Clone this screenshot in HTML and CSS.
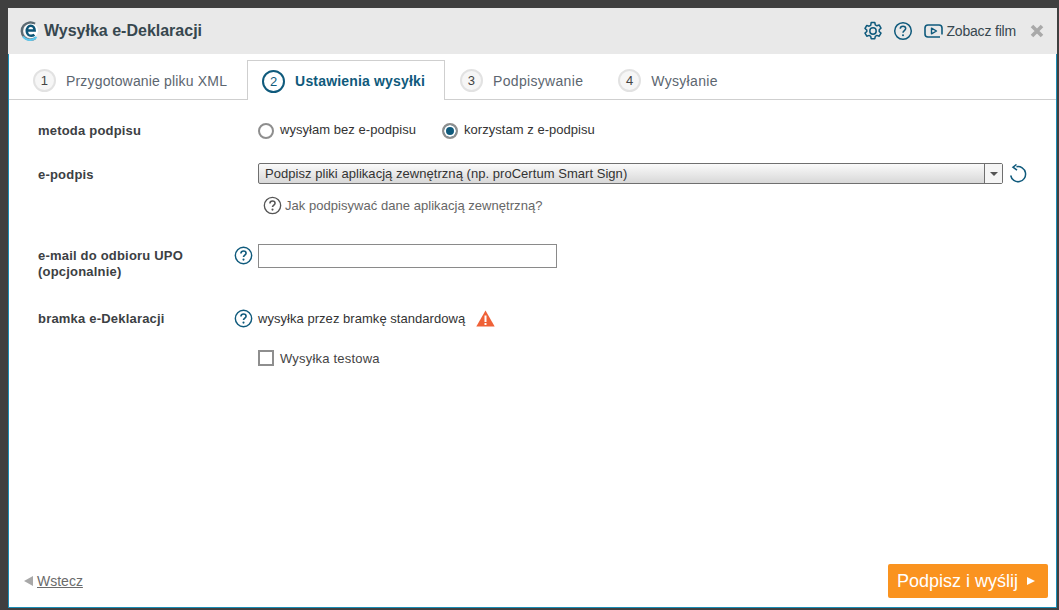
FILE: index.html
```html
<!DOCTYPE html>
<html lang="pl">
<head>
<meta charset="utf-8">
<title>Wysyłka e-Deklaracji</title>
<link rel="stylesheet" href="styles.css">
</head>
<body>
<div class="window">
  <header class="titlebar">
    <svg class="logo" width="20" height="20" viewBox="0 0 20 20"><path d="M15 2.800A8.600 8.600 0 1 0 15.500 17" fill="none" stroke="#5c6b73" stroke-width="2.400"/><path d="M3 15.500A8.600 8.600 0 0 0 16.500 16" fill="none" stroke="#5cc8ee" stroke-width="2"/><circle cx="11" cy="9.800" r="7" fill="#fff"/><path d="M6.800 9.500h7.800c0-3-1.600-4.700-3.800-4.700S6.800 7 6.800 9.900s1.800 4.900 4.300 4.900c1.300 0 2.500-.4 3.300-1.100" fill="none" stroke="#0c5577" stroke-width="2.600"/></svg>
    <h1 class="title">Wysyłka e-Deklaracji</h1>
    <div class="tools">
      <svg class="tool-ico" width="20" height="20" viewBox="0 0 20 20"><path d="M8.200 1.500h3.600l.5 2.400 1.600.9 2.300-.8 1.800 3.100-1.800 1.600v1.800l1.800 1.600-1.800 3.100-2.300-.8-1.600.9-.5 2.400H8.200l-.5-2.400-1.600-.9-2.300.8-1.800-3.100 1.800-1.600V9.100L2 7.500l1.800-3.100 2.300.8 1.600-.9z" fill="none" stroke="#0f5a7c" stroke-width="1.500" stroke-linejoin="round"/><circle cx="10" cy="10" r="3.200" fill="none" stroke="#0f5a7c" stroke-width="1.500"/></svg>
      <svg class="tool-ico help-top" width="20" height="20" viewBox="0 0 20 20"><circle cx="10" cy="10" r="8.300" fill="none" stroke="#0f5a7c" stroke-width="1.500"/><path d="M7.300 7.800C7.300 6.200 8.500 5.300 10 5.300s2.700.9 2.700 2.300c0 1.900-2.700 2-2.700 4.100" fill="none" stroke="#0f5a7c" stroke-width="1.500"/><circle cx="10" cy="14.300" r="1" fill="#0f5a7c"/></svg>
      <a class="film">
        <svg width="19" height="14" viewBox="0 0 19 14"><path d="M18 10.500V4c0-1.700-1.300-3-3-3H4C2.300 1 1 2.300 1 4v6c0 1.700 1.300 3 3 3h12" fill="none" stroke="#0f5a7c" stroke-width="1.600"/><path d="M7.500 4.200v5.600L12.500 7z" fill="none" stroke="#0f5a7c" stroke-width="1.400" stroke-linejoin="round"/></svg>
        <span>Zobacz film</span>
      </a>
      <svg class="close" width="14" height="14" viewBox="0 0 14 14"><path d="M2 2l10 10M12 2L2 12" fill="none" stroke="#a9a9a9" stroke-width="3.600"/></svg>
    </div>
  </header>

  <div class="content">
    <nav class="tabs">
      <div class="tab"><span class="num">1</span><span>Przygotowanie pliku XML</span></div>
      <div class="tab active"><span class="num">2</span><span>Ustawienia wysyłki</span></div>
      <div class="tab wide"><span class="num">3</span><span>Podpisywanie</span></div>
      <div class="tab wide"><span class="num">4</span><span>Wysyłanie</span></div>
    </nav>

    <main class="form">
      <div class="row row-method">
        <div class="label">metoda podpisu</div>
        <div class="help"></div>
        <div class="control radios">
          <label class="radio"><span class="dot"></span>wysyłam bez e-podpisu</label>
          <label class="radio"><span class="dot on"></span>korzystam z e-podpisu</label>
        </div>
      </div>

      <div class="row row-sign">
        <div class="label">e-podpis</div>
        <div class="help"></div>
        <div class="control">
          <div class="select-line">
            <div class="select"><span class="select-text">Podpisz pliki aplikacją zewnętrzną (np. proCertum Smart Sign)</span><span class="select-arrow"></span></div>
            <svg class="refresh" width="20" height="20" viewBox="0 0 20 20"><path d="M8.500 2.800A7.500 7.500 0 1 1 2.700 11.500" fill="none" stroke="#0f5a7c" stroke-width="1.500"/><path d="M8.500 .5L5 3.200l4 3" fill="none" stroke="#0f5a7c" stroke-width="1.500"/></svg>
          </div>
          <div class="hint">
            <svg width="19" height="19" viewBox="0 0 20 20"><circle cx="10" cy="10" r="8.600" fill="none" stroke="#555" stroke-width="1.400"/><path d="M7.300 7.800C7.300 6.200 8.500 5.300 10 5.300s2.700.9 2.700 2.300c0 1.900-2.700 2-2.700 4.100" fill="none" stroke="#555" stroke-width="1.600"/><circle cx="10" cy="14.300" r="1.100" fill="#555"/></svg>
            <span>Jak podpisywać dane aplikacją zewnętrzną?</span>
          </div>
        </div>
      </div>

      <div class="row row-mail">
        <div class="label">e-mail do odbioru UPO<br>(opcjonalnie)</div>
        <div class="help"><svg width="19" height="19" viewBox="0 0 20 20"><circle cx="10" cy="10" r="8.600" fill="none" stroke="#0f5a7c" stroke-width="1.500"/><path d="M7.300 7.800C7.300 6.200 8.500 5.300 10 5.300s2.700.9 2.700 2.300c0 1.900-2.700 2-2.700 4.100" fill="none" stroke="#0f5a7c" stroke-width="1.700"/><circle cx="10" cy="14.300" r="1.100" fill="#0f5a7c"/></svg></div>
        <div class="control"><input class="input" type="text"></div>
      </div>

      <div class="row row-gate">
        <div class="label">bramka e-Deklaracji</div>
        <div class="help"><svg width="19" height="19" viewBox="0 0 20 20"><circle cx="10" cy="10" r="8.600" fill="none" stroke="#0f5a7c" stroke-width="1.500"/><path d="M7.300 7.800C7.300 6.200 8.500 5.300 10 5.300s2.700.9 2.700 2.300c0 1.900-2.700 2-2.700 4.100" fill="none" stroke="#0f5a7c" stroke-width="1.700"/><circle cx="10" cy="14.300" r="1.100" fill="#0f5a7c"/></svg></div>
        <div class="control gate">
          <span>wysyłka przez bramkę standardową</span>
          <svg class="warn" width="19" height="17" viewBox="0 0 19 17"><path d="M9.500.5L.3 16.500h18.400z" fill="#ef6137"/><rect x="8.500" y="5.500" width="2" height="6.500" fill="#fff"/><rect x="8.500" y="13" width="2" height="2" fill="#fff"/></svg>
        </div>
      </div>

      <div class="row row-test">
        <div class="label"></div>
        <div class="help"></div>
        <label class="control check"><span class="box"></span>Wysyłka testowa</label>
      </div>
    </main>

    <footer class="footer">
      <a class="back"><span class="back-arrow"></span><span class="back-text">Wstecz</span></a>
      <button class="submit" type="button">Podpisz i wyślij<span class="submit-arrow"></span></button>
    </footer>
  </div>
</div>
</body>
</html>
```

FILE: styles.css
```css
* { box-sizing: border-box; }
html, body { height: 100%; }
body {
  margin: 0;
  padding: 8px 2px 2px 8px;
  background: #3f3f3f;
  font-family: "Liberation Sans", Arial, sans-serif;
  font-size: 13px;
  color: #333;
  overflow: hidden;
}
.window {
  height: 600px;
  display: flex;
  flex-direction: column;
}
.titlebar {
  height: 46px;
  flex: none;
  background: #e9e9e9;
  display: flex;
  align-items: center;
  padding: 0 13px 0 12px;
}
.logo { flex: none; }
.title {
  margin: 0 0 0 4px;
  font-size: 16px;
  font-weight: bold;
  color: #37474f;
}
.tools {
  margin-left: auto;
  display: flex;
  align-items: center;
}
.help-top { margin-left: 10px; }
.film {
  margin-left: 11px;
  display: flex;
  align-items: center;
  gap: 3px;
  font-size: 14px;
  letter-spacing: -.18px;
  color: #37474f;
}
.close { margin-left: 14px; }
.content {
  flex: 1;
  min-height: 0;
  background: #fff;
  border-left: 1px solid #1b8db5;
  border-right: 1px solid #1b8db5;
  border-bottom: 1px solid #1b8db5;
  display: flex;
  flex-direction: column;
}
.tabs {
  height: 46px;
  flex: none;
  padding: 6px 0 0 9px;
  display: flex;
  border-bottom: 1px solid #cfcfcf;
}
.tab {
  height: 40px;
  display: flex;
  align-items: center;
  gap: 10px;
  padding: 1px 20px 0 15px;
  font-size: 14px;
  letter-spacing: .17px;
  color: #5c6670;
  white-space: nowrap;
}
.tab.wide { letter-spacing: .32px; }
.tab.active {
  color: #0f5a7c;
  font-weight: bold;
  background: #fff;
  border: 1px solid #cfcfcf;
  border-bottom: 0;
  padding: 1px 19px 0 14px;
}
.num {
  width: 23px;
  height: 23px;
  flex: none;
  border-radius: 50%;
  border: 2px solid #e2e2e2;
  background: #f6f6f6;
  display: flex;
  align-items: center;
  justify-content: center;
  font-size: 13px;
  font-weight: normal;
  color: #444;
}
.active .num {
  background: #fff;
  border-color: #0f5a7c;
  color: #0f5a7c;
}
.form {
  flex: 1;
  min-height: 0;
  padding: 23px 0 0 29px;
  letter-spacing: .04px;
}
.row {
  display: grid;
  grid-template-columns: 195px 25px 1fr;
}
.label {
  font-size: 13px;
  font-weight: bold;
  letter-spacing: .2px;
  color: #3c4043;
  line-height: 16px;
}
.help svg { display: block; margin-left: 1px; }
.control { min-width: 0; }
.radios { display: flex; gap: 26px; }
.radio { display: flex; align-items: flex-start; gap: 6px; height: 16px; line-height: 14px; }
.dot {
  width: 16px;
  height: 16px;
  flex: none;
  border-radius: 50%;
  border: 2px solid #8e8e8e;
  background: #fff;
}
.dot.on {
  background: #0f5a7c;
  box-shadow: inset 0 0 0 2px #fff;
}
.row-sign { margin-top: 28px; }
.select-line { display: flex; align-items: center; margin-top: -4px; }
.select {
  width: 745px;
  height: 21px;
  border: 1px solid #6f6f6f;
  border-radius: 2px;
  background: linear-gradient(#fafafa, #d8d8d8);
  display: flex;
  align-items: center;
  justify-content: space-between;
  color: #333;
  padding-left: 6px;
}
.select-arrow {
  width: 18px;
  height: 19px;
  border-left: 1px solid #6f6f6f;
  background: #f5f5f5;
  position: relative;
}
.select-arrow::after {
  content: "";
  position: absolute;
  left: 5px;
  top: 8px;
  border: 4px solid transparent;
  border-top: 4px solid #555;
  border-bottom: 0;
}
.refresh { margin-left: 5px; }
.hint {
  margin: 12px 0 0 5px;
  display: flex;
  align-items: center;
  gap: 3px;
  color: #666;
}
.row-mail { margin-top: 29px; }
.row-mail .label { padding-top: 4px; }
.row-mail .help { padding-top: 2px; }
.input {
  display: block;
  width: 299px;
  height: 24px;
  margin: 0;
  border: 1px solid #8a8a8a;
  background: #fff;
}
.row-gate { margin-top: 29px; }
.row-gate .label { padding-top: 2px; }
.gate { display: flex; align-items: center; height: 19px; }
.warn { margin-left: 11px; }
.row-test { margin-top: 22px; }
.check { display: flex; align-items: center; gap: 6px; color: #444; letter-spacing: .2px; }
.box {
  width: 16px;
  height: 16px;
  flex: none;
  border: 2px solid #8e8e8e;
  background: #fff;
}
.footer {
  flex: none;
  display: flex;
  align-items: center;
  justify-content: space-between;
  padding: 0 8px 9px 15px;
}
.back { display: flex; align-items: center; gap: 4px; font-size: 14px; color: #6b6b6b; }
.back-text { text-decoration: underline; }
.back-arrow {
  border: 5px solid transparent;
  border-right: 9px solid #a8a8a8;
  border-left: 0;
}
.submit {
  width: 160px;
  height: 34px;
  border: 0;
  border-radius: 2px;
  background: #fa931f;
  color: #fff;
  font: 18px "Liberation Sans", Arial, sans-serif;
  display: flex;
  align-items: center;
  padding: 0 0 0 9px;
  gap: 9px;
}
.submit-arrow {
  border: 4.500px solid transparent;
  border-left: 8px solid #fff;
  border-right: 0;
}
```
